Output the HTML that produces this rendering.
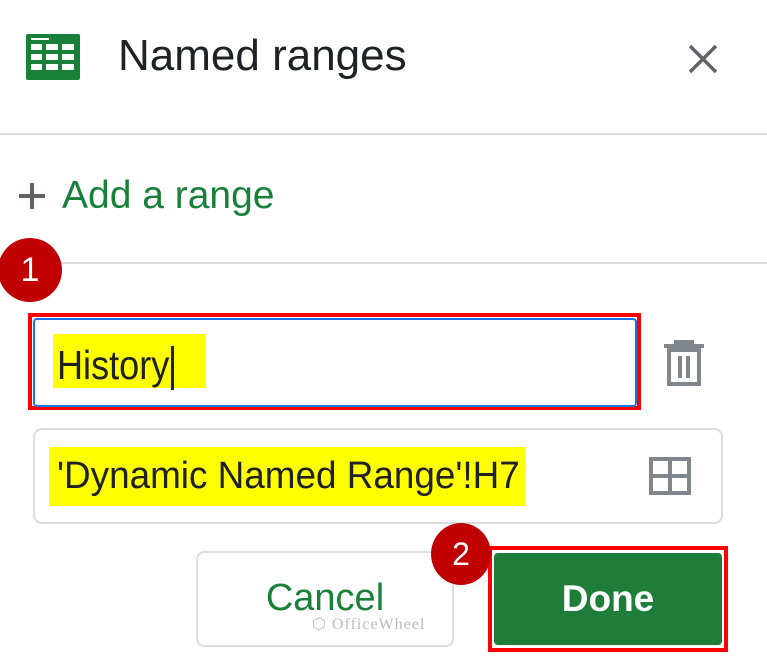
<!DOCTYPE html>
<html><head><style>
body{margin:0;width:767px;height:661px;background:#fff;position:relative;overflow:hidden;font-family:"Liberation Sans",Arial,sans-serif;}
.a{position:absolute;white-space:nowrap;}
</style></head><body>
<svg class="a" style="left:26px;top:34px" width="54" height="46" viewBox="0 0 54 46">
<rect x="0" y="0" width="54" height="46" rx="2" fill="#188038"/>
<g fill="#fff">
<rect x="5" y="4" width="18" height="2"/>
<rect x="5" y="10" width="11" height="6"/><rect x="20" y="10" width="12" height="6"/><rect x="36" y="10" width="12" height="6"/>
<rect x="5" y="20" width="11" height="6"/><rect x="20" y="20" width="12" height="6"/><rect x="36" y="20" width="12" height="6"/>
<rect x="5" y="30" width="11" height="6"/><rect x="20" y="30" width="12" height="6"/><rect x="36" y="30" width="12" height="6"/>
</g></svg>
<div class="a" style="left:118px;top:31px;font-size:44px;color:#202124;">Named ranges</div>
<svg class="a" style="left:688px;top:44px" width="30" height="30"><path d="M2 2L28 28M28 2L2 28" stroke="#5f6368" stroke-width="3.5"/></svg>
<div class="a" style="left:0;top:133px;width:767px;height:2px;background:#dadce0"></div>
<svg class="a" style="left:18px;top:182px" width="28" height="28"><path d="M14 1V27M1 14H27" stroke="#5f6368" stroke-width="4"/></svg>
<div class="a" style="left:62px;top:174px;font-size:39px;color:#188038;">Add a range</div>
<div class="a" style="left:0;top:262px;width:767px;height:2px;background:#dadce0"></div>
<div class="a" style="left:-2px;top:238px;width:64px;height:64px;border-radius:50%;background:#c00000;color:#fff;font-size:34px;text-align:center;line-height:64px;">1</div>
<div class="a" style="left:28px;top:313px;width:605px;height:89px;border:4px solid #f00;"></div>
<div class="a" style="left:33px;top:318px;width:600px;height:85px;border:2px solid #1a73e8;border-radius:4px;"></div>
<div class="a" style="left:53px;top:334px;width:153px;height:54px;background:#ff0;"></div>
<div class="a" style="left:57px;top:342px;font-size:41px;color:#202124;transform:scaleX(0.88);transform-origin:0 0;">History</div>
<div class="a" style="left:171px;top:346px;width:3px;height:44px;background:#202124"></div>
<svg class="a" style="left:662px;top:340px" width="44" height="48" viewBox="0 0 44 48"><path d="M2 6H42M14 6V2H30V6M7 10H37V44H7Z" stroke="#80868b" stroke-width="4" fill="none"/><path d="M18 16V38M26 16V38" stroke="#80868b" stroke-width="4"/></svg>
<div class="a" style="left:33px;top:428px;width:686px;height:92px;border:2px solid #dadce0;border-radius:9px;"></div>
<div class="a" style="left:49px;top:447px;width:476px;height:59px;background:#ff0;"></div>
<div class="a" style="left:57px;top:455px;font-size:38px;color:#202124;transform:scaleX(0.97);transform-origin:0 0;">'Dynamic Named Range'!H7</div>
<svg class="a" style="left:649px;top:457px" width="42" height="38"><rect x="2" y="2" width="38" height="34" stroke="#80868b" stroke-width="4" fill="none"/><path d="M21 2V36M2 19H40" stroke="#80868b" stroke-width="4"/></svg>
<div class="a" style="left:196px;top:551px;width:254px;height:92px;border:2px solid #dadce0;border-radius:8px;"></div>
<div class="a" style="left:196px;top:577px;width:258px;text-align:center;font-size:38px;color:#188038;">Cancel</div>
<div class="a" style="left:312px;top:614px;font-size:16px;color:#bbb;font-family:'Liberation Serif',serif;letter-spacing:1px;">⬡ OfficeWheel</div>
<div class="a" style="left:488px;top:546px;width:232px;height:98px;border:4px solid #f00;"></div>
<div class="a" style="left:494px;top:553px;width:228px;height:92px;background:#1e7e39;border-radius:4px;"></div>
<div class="a" style="left:494px;top:578px;width:228px;text-align:center;font-size:37px;color:#fff;font-weight:bold;">Done</div>
<div class="a" style="left:431px;top:523px;width:60px;height:62px;border-radius:50%;background:#c00000;color:#fff;font-size:32px;text-align:center;line-height:62px;">2</div>
</body></html>
